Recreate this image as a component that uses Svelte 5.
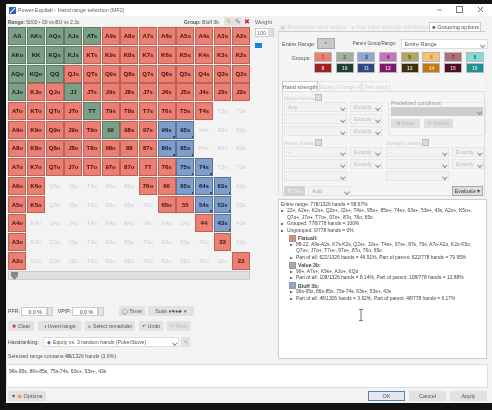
<script>
  const ranks = "AKQJT98765432".split("");
  const colors = [
    "gggggrrrrrrrr",
    "ggggrrrrrrrrr",
    "gggrrrrrrrrrr",
    "grrgrrrrrrrrr",
    "rrrrgrrrrrr..",
    "rrrrrgrrbb...",
    "rrrrrrrrbb...",
    "rrrrrrrrrbb..",
    "rr.....rrbbb.",
    "rr......rrbb.",
    "r.........rb.",
    "r..........r.",
    "r...........r",
  ];

  function label(r, c) {
    if (r === c) return ranks[r] + ranks[c];
    return r < c ? ranks[r] + ranks[c] + "s" : ranks[c] + ranks[r] + "o";
  }

  const cells = colors.flatMap((row, r) =>
    row.split("").map((k, c) => ({ text: label(r, c), kind: k }))
  );

  const groups = [
    ["#ec8172", "#a33"], ["#9cb09c", "#464"], ["#8ea8cf", "#335"], ["#c873c0", "#515"],
    ["#b0a860", "#440"], ["#f8c070", "#b72"], ["#b07078", "#633"], ["#80dcdc", "#277"],
    ["#a02020", "#fcc"], ["#1f3f30", "#cdc"], ["#2a4a80", "#ccd"], ["#801a70", "#ecd"],
    ["#40300a", "#ddc"], ["#c07810", "#fdb"], ["#501020", "#dcc"], ["#208f90", "#aee"],
  ];

  const lines = [
    { text: "Entire range: 778/1326 hands = 58.67%" },
    { text: "22+, A2s+, K2s+, Q2s+, J2s+, T4s+, 95s+, 85s+, 74s+, 63s+, 53s+, 43s, A2o+, K5o+,", arrow: 1 },
    { text: "Q7o+, J7o+, T7o+, 97o+, 87o, 76o, 65o", cont: 1 },
    { text: "Grouped: 778/778 hands = 100%", arrow: 1 },
    { text: "Ungrouped: 0/778 hands = 0%", arrow: 1 },
    { head: "Flatcall:", color: "#ec8172" },
    { text: "88-22, A9s-A2s, K7s-K2s, Q2s+, J2s+, T4s+, 97s+, 87s, 76s, A7o-A2o, K2o-K5o,", arrow: 1, sub: 1 },
    { text: "Q7o+, J7o+, T7o+, 97o+, 87o, 76o, 65o", cont: 1, sub: 1 },
    { text: "Part of all: 622/1326 hands = 46.91%, Part of parent: 622/778 hands = 79.95%", arrow: 1, sub: 1 },
    { head: "Value 3b:", color: "#9cb09c" },
    { text: "99+, A7s+, K9s+, AJo+, KQo", arrow: 1, sub: 1 },
    { text: "Part of all: 108/1326 hands = 8.14%, Part of parent: 108/778 hands = 13.88%", arrow: 1, sub: 1 },
    { head: "Bluff 3b:", color: "#8ea8cf" },
    { text: "96s-95s, 86s-85s, 75s-74s, 63s+, 53s+, 43s", arrow: 1, sub: 1 },
    { text: "Part of all: 48/1326 hands = 3.62%, Part of parent: 48/778 hands = 6.17%", arrow: 1, sub: 1 },
  ];
</script>

<div class="screen">
  <div class="window">
    <div class="titlebar">
      <svg class="appicon" viewBox="0 0 8 8"><rect width="8" height="8" fill="#2f5fb0" /><path d="M1 7 L7 1" stroke="#fff" stroke-width="1.2" /></svg>
      <span class="title">Power-Equilab - Hand range selection (MF2)</span>
      <div class="winbtns">
        <svg viewBox="0 0 60 10" width="60" height="10">
          <path d="M5 5h5" stroke="#999" />
          <rect x="24.5" y="1.5" width="6" height="6" fill="none" stroke="#777" />
          <path d="M46 2l5 5M51 2l-5 5" stroke="#666" />
        </svg>
      </div>
    </div>

    <div class="main">
      <div class="left">
        <div class="top">
          <div class="rangecol">
            <div class="rangebar">
              <span><b>Range:</b> 5000 • 00 vs BU vs 2.3x</span>
              <span class="group"><b>Group:</b> Bluff 3b</span>
              <span class="tool yellow">✎</span><span class="tool">✎</span><span class="tool red">✖</span>
            </div>
            <div class="grid">
              {#each cells as cell}
                <div class="cell {cell.kind === 'g' ? 'green' : cell.kind === 'r' ? 'red' : cell.kind === 'b' ? 'blue' : 'empty'}">{cell.text}</div>
              {/each}
            </div>
            <div class="scroll"><span class="thumb"></span></div>
          </div>
          <div class="weight">
            <span>Weight</span>
            <div class="spin"><span>100</span><i></i></div>
            <div class="slider"></div>
          </div>
        </div>

        <div class="controls">
          <div class="row r1">
            <span>PFR:</span>
            <span class="num">0.0 %</span><i class="spinner"></i>
            <span class="vpip">VPIP:</span>
            <span class="num">0.0 %</span><i class="spinner"></i>
            <span class="btn timer">◯ Timer</span>
            <span class="btn suits">Suits <b>♦♥♠♣</b> ▾</span>
          </div>
          <div class="row r2">
            <span class="btn w26"><em class="x">✖</em> Clear</span>
            <span class="btn w43">◑ Invert range</span>
            <span class="btn w50"><em class="o">●</em> Select remainder</span>
            <span class="btn w24"><em class="u">↶</em> Undo</span>
            <span class="btn w24 off">↷ Redo</span>
          </div>
          <div class="row r3">
            <span class="hr">Handranking:</span>
            <span class="select hrs"><em class="u">◆</em> Equity vs. 3 random hands (PokerStove)<i class="chev"></i></span>
            <span class="btn pencil">✎</span>
          </div>
          <div class="sel">Selected range contains <b>48</b>/1326 hands (3.6%).</div>
        </div>
      </div>

      <div class="right">
        <div class="tabs">
          <span class="tab dis t1">▣ Predefined hand ranges</span>
          <span class="tab dis t2">◕ Flop hand strength distribution</span>
          <span class="tab active t3">♣ Grouping options</span>
        </div>
        <div class="pane">
          <div class="entire">
            <span>Entire Range:</span>
            <span class="allbtn">*</span>
            <span class="parent">Parent Group/Range:</span>
            <span class="select psel">Entire Range<i class="chev"></i></span>
          </div>
          <div class="groups">
            <span class="glabel">Groups:</span>
            <div class="gbtns">
              {#each groups as g, i}
                <span class="gbtn" style="background:{g[0]};color:{g[1]}">{i + 1}</span>
              {/each}
            </div>
          </div>
          <div class="subtabs">
            <span class="sub active s1">Hand strength</span>
            <span class="sub s2">Equity / Range %</span>
            <span class="sub s3">Text input</span>
          </div>
          <div class="subpane">
            <div class="cols">
              <div class="col">
                <div class="cap">Made hands <i class="xbox"></i></div>
                <div class="pick"><span class="select wide">Any<i class="chev"></i></span><span class="select ex">Exactly<i class="chev"></i></span></div>
                <div class="pick"><span class="select wide"><i class="chev"></i></span><span class="select ex">Exactly<i class="chev"></i></span></div>
                <div class="pick"><span class="select wide"><i class="chev"></i></span><span class="select ex">Exactly<i class="chev"></i></span></div>
              </div>
              <div class="predef">
                <div class="legend">Predefined conditions</div>
                <div class="predsel"><i class="chev"></i></div>
                <div class="predbtns"><span>■ Save</span><span>✕ Delete</span></div>
              </div>
            </div>
            <div class="cols second">
              <div class="col">
                <div class="cap">Flush draws <i class="xbox"></i></div>
                <div class="pick"><span class="select wide">-<i class="chev"></i></span><span class="select ex">Exactly<i class="chev"></i></span></div>
                <div class="pick"><span class="select wide"><i class="chev"></i></span><span class="select ex">Exactly<i class="chev"></i></span></div>
                <div class="pick"><span class="select wide"><i class="chev"></i></span></div>
              </div>
              <div class="col">
                <div class="cap">Straight draws <i class="xbox"></i></div>
                <div class="pick"><span class="select wide">-<i class="chev"></i></span><span class="select ex">Exactly<i class="chev"></i></span></div>
                <div class="pick"><span class="select wide"><i class="chev"></i></span><span class="select ex">Exactly<i class="chev"></i></span></div>
                <div class="pick"><span class="select wide"><i class="chev"></i></span></div>
              </div>
            </div>
            <div class="evalrow">
              <span class="setbtn">⬆ Set</span>
              <span class="select addsel">Add<i class="chev"></i></span>
              <span class="evalbtn">Evaluate ▾</span>
            </div>
          </div>
        </div>

        <div class="report">
          {#each lines as l}
            {#if l.head}
              <div class="head"><i style="background:{l.color}"></i><b>{l.head}</b></div>
            {:else}
              <div class="line" class:sub1={l.sub} class:cont={l.cont}>
                {#if l.arrow}<span class="arrow"></span>{/if}{l.text}
              </div>
            {/if}
          {/each}
        </div>
      </div>
    </div>

    <div class="textarea">96s-95s, 86s-85s, 75s-74s, 63s+, 53s+, 43s</div>

    <div class="footer">
      <span class="btn options">▾ <em class="sun">◉</em> Options</span>
      <div class="actions">
        <span class="btn ok">OK</span>
        <span class="btn act">Cancel</span>
        <span class="btn act">Apply</span>
      </div>
    </div>

    <svg class="cursor" viewBox="0 0 6 12" width="6" height="12"><path d="M1 .5h4M1 11.5h4M3 .5v11" stroke="#777" fill="none" /></svg>
  </div>
</div>

<style>
  :global(body) {
    margin: 0;
    background: #121212;
  }
  .screen {
    width: 492px;
    height: 410px;
    box-sizing: border-box;
    padding: 4px 0 7px 6px;
    background: #121212;
    overflow: hidden;
    font-family: "Liberation Sans", Arial, sans-serif;
    font-size: 5.5px;
    color: #444;
  }
  .window {
    position: relative;
    height: 399px;
    background: #f3f3f3;
    display: flex;
    flex-direction: column;
    filter: blur(0.5px);
  }
  i, em {
    font-style: normal;
  }

  .titlebar {
    height: 12px;
    background: #fff;
    display: flex;
    align-items: center;
    padding-left: 3px;
    flex: none;
  }
  .appicon {
    width: 7px;
    height: 7px;
    margin-right: 2px;
  }
  .title {
    font-size: 5.4px;
    color: #666;
  }
  .winbtns {
    margin-left: auto;
    display: flex;
  }

  .main {
    display: flex;
    height: 346px;
    flex: none;
  }
  .left {
    width: 271px;
    flex: none;
    display: flex;
    flex-direction: column;
  }
  .top {
    display: flex;
    height: 284px;
  }
  .rangecol {
    width: 245px;
    padding-left: 2px;
    flex: none;
  }
  .rangebar {
    height: 11px;
    display: flex;
    align-items: center;
    font-size: 5px;
    width: 243px;
    color: #555;
    white-space: nowrap;
  }
  .group {
    margin-left: auto;
    margin-right: 5px;
  }
  .tool {
    width: 9px;
    height: 9px;
    background: #e2e2e2;
    text-align: center;
    line-height: 9px;
    font-size: 7px;
    color: #777;
  }
  .tool.yellow {
    color: #d9a520;
  }
  .tool.red {
    color: #c22;
    background: #eee;
  }
  .grid {
    display: grid;
    grid-template-columns: repeat(13, 18.67px);
    grid-auto-rows: 18.7px;
    width: 243px;
  }
  .cell {
    box-sizing: border-box;
    margin: 0.4px;
    display: flex;
    align-items: center;
    justify-content: center;
    font-size: 6px;
    font-weight: bold;
    border: 1px solid;
    position: relative;
  }
  .green {
    background: #7c9f86;
    border-color: #5e7a66;
    color: #142018;
  }
  .red {
    background: #ec7f72;
    border-color: #b8645a;
    color: #401010;
  }
  .blue {
    background: #7f9ecb;
    border-color: #5c7398;
    color: #10182c;
  }
  .blue::after {
    content: "";
    position: absolute;
    right: 0;
    bottom: 0;
    width: 1.5px;
    height: 2px;
    background: #445;
  }
  .empty {
    border-color: transparent;
    color: #cdcdcd;
    font-weight: normal;
  }
  .scroll {
    margin-top: 1px;
    height: 9px;
    width: 242px;
    background: #dcdfdf;
    border: 0.5px solid #ccc;
    box-sizing: border-box;
  }
  .thumb {
    display: block;
    width: 7px;
    height: 8px;
    margin-left: 2px;
    background: #7d8a90;
    clip-path: polygon(0 0, 100% 0, 100% 50%, 50% 100%, 0 50%);
  }
  .weight {
    padding: 3px 0 0 2px;
    width: 22px;
    color: #666;
  }
  .spin {
    margin-top: 3px;
    height: 9px;
    width: 19px;
    border: 0.5px solid #ccc;
    background: #fff;
    box-sizing: border-box;
    display: flex;
    align-items: center;
    padding-left: 1px;
  }
  .spin i {
    margin-left: auto;
    width: 5px;
    height: 8px;
    background: #ddd;
  }
  .slider {
    margin-top: 6px;
    width: 7px;
    height: 5px;
    background: #1f7fe0;
  }

  .controls {
    padding: 6px 0 0 2px;
    font-size: 5.2px;
  }
  .row {
    display: flex;
    align-items: center;
    width: 188px;
  }
  .r1 {
    height: 10px;
  }
  .r2 {
    height: 10px;
    margin-top: 5px;
    gap: 4px;
  }
  .r3 {
    height: 10px;
    margin-top: 6px;
  }
  .num {
    width: 26px;
    height: 9px;
    margin-left: 1px;
    background: #fff;
    border: 0.5px solid #ccc;
    box-sizing: border-box;
    text-align: right;
    padding-right: 4px;
    line-height: 8px;
  }
  .spinner {
    width: 6px;
    height: 9px;
    background: #e4e4e4;
    border: 0.5px solid #ccc;
    box-sizing: border-box;
  }
  .vpip {
    margin-left: 5px;
  }
  .btn {
    background: #e2e2e2;
    height: 10px;
    box-sizing: border-box;
    display: inline-flex;
    align-items: center;
    justify-content: center;
    gap: 2px;
    white-space: nowrap;
    color: #555;
  }
  .timer {
    width: 26px;
    margin-left: 15px;
  }
  .suits {
    width: 46px;
    margin-left: 3px;
  }
  .suits b {
    color: #2a4a70;
    letter-spacing: 0.3px;
  }
  .w26 {
    width: 26px;
  }
  .w43 {
    width: 43px;
  }
  .w50 {
    width: 50px;
  }
  .w24 {
    width: 24px;
  }
  .off {
    color: #bbb;
  }
  .x {
    color: #c22;
  }
  .o {
    color: #7a9a3a;
  }
  .u {
    color: #4a6ab0;
  }
  .hr {
    width: 35px;
    flex: none;
  }
  .select {
    position: relative;
    display: inline-flex;
    align-items: center;
    background: #fff;
    border: 0.5px solid #ddd;
    box-sizing: border-box;
    height: 10px;
    padding-left: 3px;
    color: #555;
    gap: 2px;
    white-space: nowrap;
  }
  .chev {
    position: absolute;
    right: 2px;
    top: 3px;
    width: 2.5px;
    height: 2.5px;
    border-right: 0.6px solid #888;
    border-bottom: 0.6px solid #888;
    transform: rotate(45deg);
  }
  .hrs {
    width: 136px;
  }
  .pencil {
    width: 9px;
    margin-left: 2px;
    color: #d9a520;
  }
  .sel {
    margin-top: 6px;
    color: #555;
  }

  .right {
    width: 210px;
    flex: none;
    display: flex;
    flex-direction: column;
  }
  .tabs {
    display: flex;
    height: 9px;
    margin-top: 6px;
    align-items: flex-end;
  }
  .tab {
    height: 9px;
    display: flex;
    align-items: center;
    white-space: nowrap;
    box-sizing: border-box;
    padding-left: 2px;
    font-size: 5.5px;
  }
  .tab.dis {
    color: #d4d4d4;
  }
  .t1 {
    width: 71px;
    margin-left: 1px;
  }
  .t2 {
    width: 80px;
  }
  .t3 {
    width: 52px;
    background: #fff;
    border: 0.5px solid #ccc;
    border-bottom: none;
    color: #555;
  }
  .pane {
    box-sizing: border-box;
    margin-left: 1px;
    width: 207px;
    height: 164px;
    border-top: 0.5px solid #ccc;
    border-left: 0.5px solid #ddd;
    background: #f5f5f5;
    padding: 6px 0 0 3px;
  }
  .entire {
    display: flex;
    align-items: center;
    height: 11px;
    color: #555;
    white-space: nowrap;
  }
  .allbtn {
    width: 18px;
    height: 11px;
    margin-left: 1px;
    flex: none;
    background: #c9c9c9;
    border: 0.5px solid #aaa;
    box-sizing: border-box;
    text-align: center;
    line-height: 10px;
  }
  .parent {
    margin-left: 18px;
    width: 46px;
    flex: none;
    font-size: 4.6px;
  }
  .psel {
    width: 87px;
    margin-left: 2px;
    flex: none;
  }
  .groups {
    display: flex;
    margin-top: 3px;
  }
  .glabel {
    width: 29px;
    text-align: right;
    padding-top: 3px;
    color: #555;
    flex: none;
  }
  .gbtns {
    margin-left: 3px;
    display: grid;
    grid-template-columns: repeat(8, 18px);
    grid-auto-rows: 10px;
    column-gap: 3.7px;
    row-gap: 1px;
  }
  .gbtn {
    border: 1px solid #b8b8b8;
    box-sizing: border-box;
    text-align: center;
    line-height: 8px;
    font-weight: bold;
    font-size: 5px;
  }
  .subtabs {
    display: flex;
    margin-top: 8px;
    height: 10px;
  }
  .sub {
    color: #d2d2d2;
    box-sizing: border-box;
    border: 0.5px solid #e8e8e8;
    border-bottom: none;
    display: flex;
    align-items: center;
    justify-content: center;
    white-space: nowrap;
  }
  .sub.active {
    color: #666;
    background: #fff;
    border-color: #ccc;
  }
  .s1 {
    width: 36px;
  }
  .s2 {
    width: 43px;
    margin-left: 1px;
  }
  .s3 {
    width: 28px;
  }
  .subpane {
    box-sizing: border-box;
    border: 0.5px solid #ddd;
    width: 203px;
    height: 105px;
    padding: 1px 0 0 1px;
    color: #d0d0d0;
  }
  .cols {
    display: flex;
    gap: 6px;
  }
  .second {
    margin-top: 0;
    gap: 4px;
  }
  .col {
    width: 98px;
  }
  .cap {
    height: 9px;
    display: flex;
    align-items: center;
    gap: 1px;
    color: #ccc;
    white-space: nowrap;
  }
  .xbox {
    width: 5px;
    height: 5px;
    background: #ddd;
    border: 0.5px solid #bbb;
  }
  .pick {
    display: flex;
    gap: 3px;
    margin-bottom: 2px;
  }
  .pick .select {
    background: #f2f2f2;
    border-color: #e6e6e6;
    color: #bbb;
  }
  .wide {
    width: 63px;
  }
  .ex {
    width: 32px;
  }
  .predef {
    margin-top: 9px;
    padding: 0 2px;
    width: 98px;
    height: 34px;
    box-sizing: border-box;
    border: 0.5px solid #e8e8e8;
  }
  .legend {
    margin-top: -3px;
    padding-bottom: 1px;
    color: #999;
    font-size: 5.2px;
  }
  .predsel {
    position: relative;
    height: 9px;
    width: 92px;
    background: #cdcdcd;
  }
  .predbtns {
    display: flex;
    gap: 4px;
    margin-top: 3px;
  }
  .predbtns span {
    width: 29px;
    height: 9px;
    background: #dedede;
    color: #bdbdbd;
    text-align: center;
    line-height: 9px;
  }
  .evalrow {
    display: flex;
    align-items: center;
    margin-top: 3px;
    height: 10px;
    gap: 3px;
  }
  .setbtn {
    width: 21px;
    height: 10px;
    background: #d2d2d2;
    color: #eee;
    text-align: center;
    line-height: 10px;
  }
  .evalrow .addsel {
    width: 43px;
    color: #aaa;
    background: #f2f2f2;
    border-color: #e4e4e4;
  }
  .evalbtn {
    margin-left: auto;
    margin-right: 1px;
    width: 31px;
    height: 10px;
    background: #dcdcdc;
    border: 0.5px solid #aaa;
    box-sizing: border-box;
    color: #444;
    text-align: center;
    line-height: 9px;
  }

  .report {
    box-sizing: border-box;
    margin: 4px 0 0 1px;
    width: 209px;
    height: 160px;
    background: #fff;
    border: 0.5px solid #ccc;
    padding: 2px 0 0 2px;
    font-size: 4.9px;
    line-height: 6.4px;
    color: #444;
    white-space: nowrap;
    overflow: hidden;
  }
  .line {
    position: relative;
    height: 6.4px;
  }
  .arrow {
    display: inline-block;
    width: 0;
    height: 0;
    border-left: 3px solid #333;
    border-top: 1.5px solid transparent;
    border-bottom: 1.5px solid transparent;
    margin-right: 3px;
  }
  .cont {
    padding-left: 6px;
  }
  .sub1 {
    margin-left: 9px;
  }
  .head {
    display: flex;
    align-items: center;
    gap: 2px;
    margin: 0.8px 0 0 8px;
    height: 7px;
    font-size: 5.2px;
  }
  .head i {
    width: 5px;
    height: 5px;
    border: 0.5px solid #999;
  }

  .textarea {
    box-sizing: border-box;
    margin: 2px 4px 0 0;
    height: 24px;
    background: #fff;
    border: 0.5px solid #ddd;
    padding: 3px 2px;
    font-size: 5px;
    flex: none;
  }
  .footer {
    display: flex;
    align-items: center;
    height: 10px;
    margin-top: 3px;
    padding: 0 5px 0 2px;
  }
  .options {
    width: 38px;
  }
  .sun {
    color: #e0a040;
  }
  .actions {
    margin-left: auto;
    display: flex;
    gap: 4px;
  }
  .ok {
    width: 37px;
    height: 10px;
    border: 1px solid #5b82b8;
    background: #e4e8ee;
  }
  .act {
    width: 37px;
    height: 10px;
  }
  .cursor {
    position: absolute;
    left: 352px;
    top: 305px;
  }
</style>
